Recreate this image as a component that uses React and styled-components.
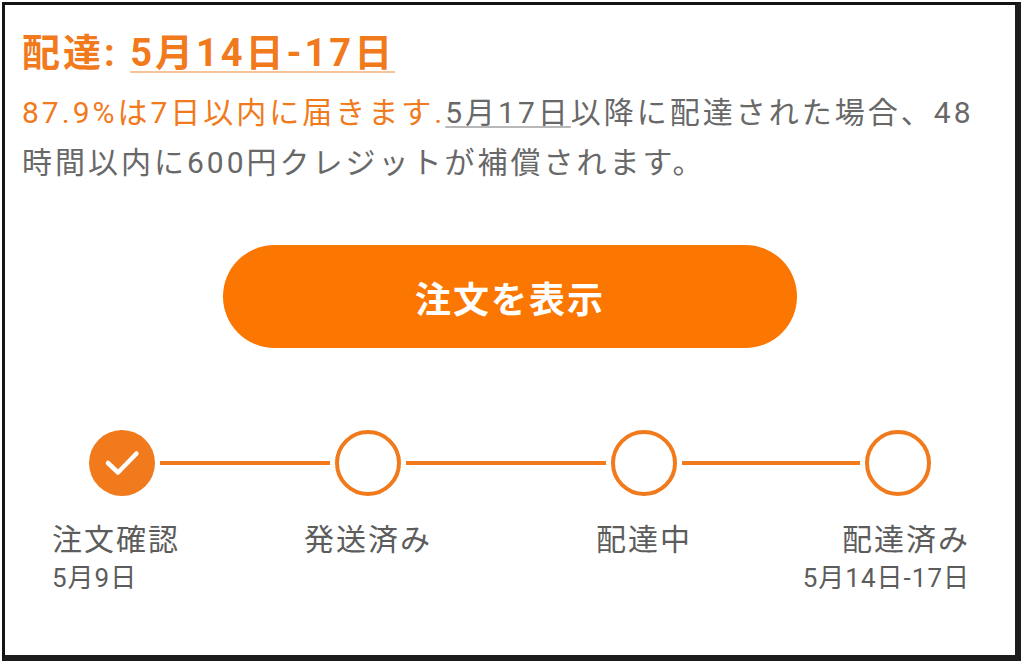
import React from "react";
import styled, { createGlobalStyle } from "styled-components";

const ORANGE = "#f07a1c";
const BTN = "#fb7701";
const GRAY = "#686868";
const LABEL = "#5c5c5c";
const FONT = `Roboto, "Noto Sans CJK JP", sans-serif`;

const Global = createGlobalStyle`
  html, body { margin: 0; padding: 0; background: #fff; }
  body { font-family: ${FONT}; }
`;

const Page = styled.div`
  width: 1024px;
  height: 664px;
  box-sizing: border-box;
  padding: 2px 3px 3px 2px;
  background: #fff;
`;

const Frame = styled.div`
  height: 100%;
  box-sizing: border-box;
  border-top: 3px solid #141414;
  border-left: 3px solid #141414;
  border-right: 6px solid #1c1c1c;
  border-bottom: 6px solid #1c1c1c;
  padding: 24px 0 0 17px;
  display: flex;
  flex-direction: column;
`;

const Title = styled.h1`
  margin: 0;
  font-family: ${FONT};
  font-size: 38px;
  font-weight: 700;
  line-height: 48px;
  letter-spacing: 3px;
  color: ${ORANGE};
  white-space: nowrap;
`;

const DateLink = styled.span`
  text-decoration: underline;
  text-decoration-color: rgba(240, 122, 28, 0.45);
  text-decoration-thickness: 2px;
  text-underline-offset: 5px;
`;

const Body = styled.p`
  margin: 11px 0 0 0;
  width: 975px;
  font-family: ${FONT};
  font-size: 30px;
  line-height: 50px;
  letter-spacing: 3px;
  color: ${GRAY};
`;

const Accent = styled.span`
  color: ${ORANGE};
`;

const Underlined = styled.span`
  text-decoration: underline;
  text-decoration-color: #b8b8b8;
  text-decoration-thickness: 2px;
  text-underline-offset: 3px;
`;

const ButtonRow = styled.div`
  display: flex;
  justify-content: center;
  margin: 57px 17px 0 0;
`;

const ViewButton = styled.button`
  width: 574px;
  height: 103px;
  border: none;
  border-radius: 52px;
  background: ${BTN};
  color: #fff;
  font-family: ${FONT};
  font-size: 36px;
  font-weight: 700;
  letter-spacing: 2px;
  cursor: pointer;
`;

const Track = styled.div`
  display: flex;
  align-items: center;
  margin: 82px 0 0 67px;
`;

const Circle = styled.div`
  width: 66px;
  height: 66px;
  box-sizing: border-box;
  border-radius: 50%;
  flex: none;
  display: flex;
  align-items: center;
  justify-content: center;
  background: ${(p) => (p.$done ? ORANGE : "#fff")};
  border: ${(p) => (p.$done ? "none" : `4px solid ${ORANGE}`)};
`;

const Connector = styled.div`
  width: ${(p) => p.$w}px;
  height: 4px;
  margin: 0 5px;
  background: ${ORANGE};
  flex: none;
`;

const Labels = styled.div`
  display: grid;
  grid-template-columns: 194px 244px 308px 172px;
  margin: 25px 0 0 30px;
`;

const Label = styled.div`
  display: flex;
  flex-direction: column;
  align-items: ${(p) => p.$align};
  text-align: ${(p) => p.$text};
`;

const StepName = styled.div`
  font-family: ${FONT};
  font-size: 30px;
  line-height: 38px;
  letter-spacing: 2px;
  color: ${LABEL};
  white-space: nowrap;
`;

const StepDate = styled.div`
  font-family: ${FONT};
  font-size: 26px;
  line-height: 38px;
  letter-spacing: 1px;
  color: ${LABEL};
  white-space: nowrap;
`;

const Check = () => (
  <svg width="66" height="66" viewBox="0 0 66 66">
    <path
      d="M19 33 L29 42.5 L47.5 23.5"
      fill="none"
      stroke="#fff"
      strokeWidth="4.5"
      strokeLinecap="round"
      strokeLinejoin="round"
    />
  </svg>
);

const steps = [
  { name: "注文確認", date: "5月9日", align: "flex-start", text: "left" },
  { name: "発送済み", align: "center", text: "center" },
  { name: "配達中", align: "center", text: "center" },
  { name: "配達済み", date: "5月14日-17日", align: "flex-end", text: "right" },
];

export default function App() {
  return (
    <>
      <Global />
      <Page>
        <Frame>
          <Title>
            配達: <DateLink>5月14日-17日</DateLink>
          </Title>
          <Body>
            <Accent>87.9%は7日以内に届きます.</Accent>
            <Underlined>5月17日</Underlined>以降に配達された場合、48時間以内に600円クレジットが補償されます。
          </Body>
          <ButtonRow>
            <ViewButton>注文を表示</ViewButton>
          </ButtonRow>
          <Track>
            <Circle $done>
              <Check />
            </Circle>
            <Connector $w={170} />
            <Circle />
            <Connector $w={200} />
            <Circle />
            <Connector $w={178} />
            <Circle />
          </Track>
          <Labels>
            {steps.map((s) => (
              <Label key={s.name} $align={s.align} $text={s.text}>
                <StepName>{s.name}</StepName>
                {s.date && <StepDate>{s.date}</StepDate>}
              </Label>
            ))}
          </Labels>
        </Frame>
      </Page>
    </>
  );
}
